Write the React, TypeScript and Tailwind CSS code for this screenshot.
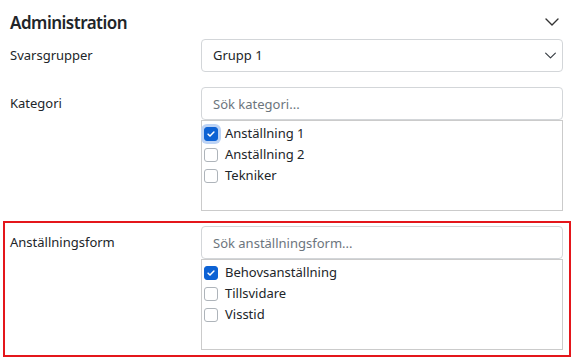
import { ChangeEvent, useState } from "react";

type Option = { id: string; label: string };

const kategorier: Option[] = [
  { id: "k1", label: "Anställning 1" },
  { id: "k2", label: "Anställning 2" },
  { id: "k3", label: "Tekniker" },
];

const anstallningsformer: Option[] = [
  { id: "a1", label: "Behovsanställning" },
  { id: "a2", label: "Tillsvidare" },
  { id: "a3", label: "Visstid" },
];

function Chevron({ className }: { className?: string }) {
  return (
    <svg className={className} viewBox="0 0 16 16" fill="none">
      <path d="M2 5l6 6 6-6" stroke="currentColor" strokeWidth={1.4} strokeLinecap="round" strokeLinejoin="round" />
    </svg>
  );
}

function CheckList({
  options,
  checked,
  focused,
  onToggle,
}: {
  options: Option[];
  checked: string[];
  focused?: string;
  onToggle: (id: string) => void;
}) {
  return (
    <div className="h-[91px] border border-[#cbcbcb] bg-white pl-[2px] pt-[2px]">
      {options.map((o) => {
        const on = checked.includes(o.id);
        return (
          <label key={o.id} className="flex h-[21px] items-center gap-[7px] cursor-pointer">
            <span
              className={
                "flex h-[14px] w-[14px] items-center justify-center rounded-[3px] border " +
                (on ? "border-[#0d62d4] bg-[#0d62d4]" : "border-[#aeb4ba] bg-white") +
                (focused === o.id ? " ring-[3px] ring-[#bcd3f5]" : "")
              }
            >
              <input type="checkbox" className="hidden" checked={on} onChange={() => onToggle(o.id)} />
              {on && (
                <svg className="h-[10px] w-[10px] text-white" viewBox="0 0 12 12" fill="none">
                  <path d="M2.5 6.2l2.3 2.3 4.7-4.8" stroke="currentColor" strokeWidth={1.8} strokeLinecap="round" strokeLinejoin="round" />
                </svg>
              )}
            </span>
            <span className="text-[13px] text-[#212529]">{o.label}</span>
          </label>
        );
      })}
    </div>
  );
}

export default function App() {
  const [grupp, setGrupp] = useState("Grupp 1");
  const [katSearch, setKatSearch] = useState("");
  const [formSearch, setFormSearch] = useState("");
  const [kat, setKat] = useState<string[]>(["k1"]);
  const [form, setForm] = useState<string[]>(["a1"]);

  const toggle = (list: string[], set: (v: string[]) => void) => (id: string) =>
    set(list.includes(id) ? list.filter((x) => x !== id) : [...list, id]);

  const inputCls =
    "h-[33px] w-full rounded-[4px] border border-[#d3d6d9] bg-white px-[11px] text-[13px] text-[#212529] placeholder-[#6c757d] outline-none";

  return (
    <div className="h-[359px] w-[574px] overflow-hidden bg-white font-['Segoe_UI','Noto_Sans',sans-serif] text-[#212529]">
      {/* Header */}
      <div className="flex h-[39px] items-center justify-between pl-[10px] pr-[14px] pt-[6px]">
        <h2 className="text-[17px] font-semibold tracking-[-0.5px]">Administration</h2>
        <Chevron className="mb-[2px] h-[16px] w-[16px] text-[#333]" />
      </div>

      {/* Svarsgrupper */}
      <div className="flex pl-[10px]">
        <div className="flex h-[33px] w-[191px] items-center text-[13px]">Svarsgrupper</div>
        <div className="relative w-[362px]">
          <select
            value={grupp}
            onChange={(e: ChangeEvent<HTMLSelectElement>) => setGrupp(e.target.value)}
            className={inputCls + " appearance-none"}
          >
            <option>Grupp 1</option>
            <option>Grupp 2</option>
          </select>
          <Chevron className="pointer-events-none absolute right-[6px] top-[10px] h-[13px] w-[13px] text-[#343a40]" />
        </div>
      </div>

      {/* Kategori */}
      <div className="mt-[15px] flex pl-[10px]">
        <div className="flex h-[33px] w-[191px] items-center text-[13px]">Kategori</div>
        <div className="w-[362px]">
          <input
            value={katSearch}
            onChange={(e) => setKatSearch(e.target.value)}
            placeholder="Sök kategori..."
            className={inputCls}
          />
          <CheckList options={kategorier} checked={kat} focused="k1" onToggle={toggle(kat, setKat)} />
        </div>
      </div>

      {/* Anställningsform */}
      <div className="ml-[3px] mt-[10px] h-[136px] w-[568px] border-2 border-[#e4161b] pl-[5px] pt-[3px]">
        <div className="flex">
          <div className="flex h-[33px] w-[191px] items-center text-[13px]">Anställningsform</div>
          <div className="w-[362px]">
            <input
              value={formSearch}
              onChange={(e) => setFormSearch(e.target.value)}
              placeholder="Sök anställningsform..."
              className={inputCls}
            />
            <CheckList options={anstallningsformer} checked={form} onToggle={toggle(form, setForm)} />
          </div>
        </div>
      </div>
    </div>
  );
}
